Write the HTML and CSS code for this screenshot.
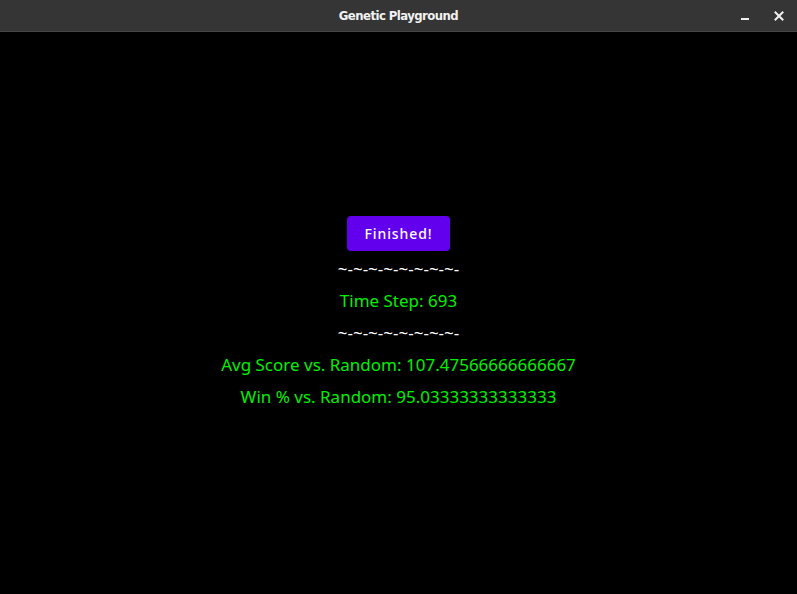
FILE: index.html
```html
<!DOCTYPE html>
<html>
<head>
<meta charset="utf-8">
<link rel="stylesheet" href="styles.css">
</head>
<body>
<div class="window">
  <header class="titlebar">
    <span class="title">Genetic Playground</span>
    <div class="controls">
      <span class="ctl min"></span>
      <svg class="ctl close" width="10" height="10" viewBox="0 0 10 10"><path d="M1.5 1.5 L8.5 8.5 M8.5 1.5 L1.5 8.5" stroke="#f0f0f0" stroke-width="2" stroke-linecap="square"/></svg>
    </div>
  </header>
  <main class="content">
    <button class="btn">Finished!</button>
    <div class="line sep">~-~-~-~-~-~-~-~-</div>
    <div class="line green">Time Step: 693</div>
    <div class="line sep">~-~-~-~-~-~-~-~-</div>
    <div class="line green">Avg Score vs. Random: 107.47566666666667</div>
    <div class="line green">Win % vs. Random: 95.03333333333333</div>
  </main>
</div>
</body>
</html>
```
FILE: styles.css
```css
html, body {
  margin: 0;
  padding: 0;
  background: #000;
}
.window {
  width: 797px;
  height: 594px;
  display: flex;
  flex-direction: column;
  background: #000;
}
.titlebar {
  height: 31px;
  background: #353535;
  border-bottom: 1px solid #454545;
  display: flex;
  align-items: center;
  justify-content: center;
  position: relative;
  flex: none;
}
.title {
  font-family: "DejaVu Sans Condensed", "DejaVu Sans", sans-serif;
  font-weight: bold;
  font-size: 13px;
  color: #f2f2f2;
  letter-spacing: -0.55px;
}
.controls {
  position: absolute;
  right: 13px;
  top: 0;
  height: 31px;
  display: flex;
  align-items: center;
  gap: 25px;
}
.ctl.min {
  width: 8px;
  height: 2px;
  background: #f0f0f0;
  margin-top: 7px;
}
.content {
  flex: 1;
  display: flex;
  flex-direction: column;
  align-items: center;
  padding-top: 184px;
  font-family: "Noto Sans", sans-serif;
  font-size: 17px;
}
.btn {
  width: 103px;
  height: 35px;
  background: #6200ee;
  color: #fff;
  border: none;
  border-radius: 4px;
  font-family: "Noto Sans", sans-serif;
  font-size: 14px;
  font-weight: 500;
  letter-spacing: 0.9px;
  padding: 0;
  margin-bottom: 2px;
}
.line {
  line-height: 32px;
  height: 32px;
}
.sep {
  color: #fff;
}
.green {
  color: #00f000;
}
```
